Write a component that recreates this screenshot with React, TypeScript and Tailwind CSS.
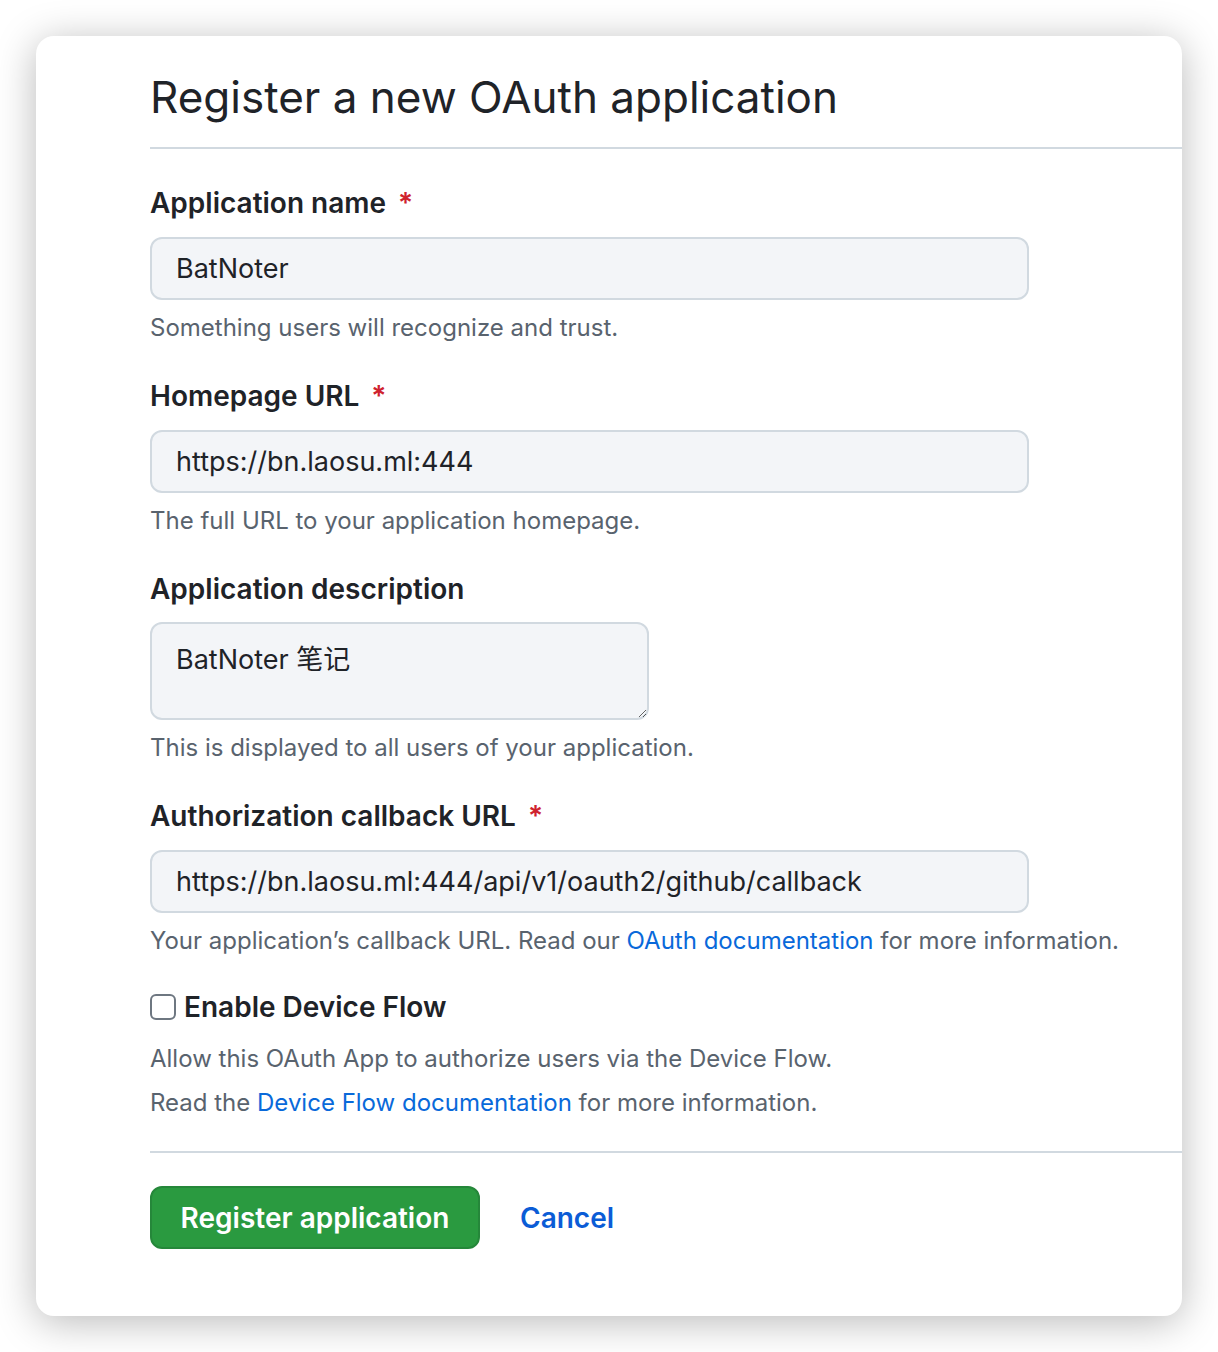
import React from "react";

const font = { fontFamily: 'Inter, "Noto Sans CJK SC", sans-serif' };

function Label({ text, required }: { text: string; required?: boolean }) {
  return (
    <div className="text-[28px] leading-[36px] font-semibold text-[#1f2328]">
      {text}
      {required && <span className="ml-3 text-[#cf222e]">*</span>}
    </div>
  );
}

function Note({ children }: { children: React.ReactNode }) {
  return <p className="mt-[10px] text-[24px] leading-[36px] text-[#59636e]">{children}</p>;
}

function Field({
  label,
  value,
  note,
  required,
}: {
  label: string;
  value: string;
  note: React.ReactNode;
  required?: boolean;
}) {
  return (
    <div className="mt-8 first:mt-0">
      <Label text={label} required={required} />
      <input
        readOnly
        defaultValue={value}
        className="mt-4 block h-[63px] w-[879px] rounded-[12px] border-2 border-[#d1d9e0] bg-[#f3f5f8] px-6 text-[27px] text-[#1f2328] outline-none"
      />
      <Note>{note}</Note>
    </div>
  );
}

export default function App() {
  return (
    <div className="min-h-[1352px] bg-white pt-9 pl-9" style={font}>
      <div className="h-[1280px] w-[1146px] rounded-[18px] bg-white pl-[114px] shadow-[0_6px_40px_rgba(0,0,0,0.28)]">
        <div className="border-b-2 border-[#d1d9e0] pt-[33px] pb-[22px]">
          <h1 className="text-[44px] leading-[56px] font-normal text-[#1f2328]">
            Register a new OAuth application
          </h1>
        </div>

        <div className="pt-[36px]">
          <Field
            label="Application name"
            required
            value="BatNoter"
            note="Something users will recognize and trust."
          />
          <Field
            label="Homepage URL"
            required
            value="https://bn.laosu.ml:444"
            note="The full URL to your application homepage."
          />

          <div className="mt-8">
            <Label text="Application description" />
            <textarea
              readOnly
              defaultValue="BatNoter 笔记"
              className="mt-[15px] block h-[98px] w-[499px] rounded-[12px] border-2 border-[#d1d9e0] bg-[#f3f5f8] px-6 pt-[18px] text-[27px] leading-[36px] text-[#1f2328] outline-none"
            />
            <Note>This is displayed to all users of your application.</Note>
          </div>

          <Field
            label="Authorization callback URL"
            required
            value="https://bn.laosu.ml:444/api/v1/oauth2/github/callback"
            note={
              <>
                Your application’s callback URL. Read our{" "}
                <a className="text-[#0969da]">OAuth documentation</a> for more information.
              </>
            }
          />

          <div className="mt-[30px] flex items-center gap-2">
            <span className="h-[26px] w-[26px] rounded-[6px] border-2 border-[#6e7781] bg-white" />
            <span className="text-[28px] leading-[36px] font-semibold text-[#1f2328]">
              Enable Device Flow
            </span>
          </div>
          <p className="mt-[16px] text-[24px] leading-[36px] text-[#59636e]">
            Allow this OAuth App to authorize users via the Device Flow.
          </p>
          <p className="mt-2 text-[24px] leading-[36px] text-[#59636e]">
            Read the <a className="text-[#0969da]">Device Flow documentation</a> for more information.
          </p>
        </div>

        <div className="mt-[30px] border-t-2 border-[#d1d9e0] pt-[33px]">
          <div className="flex items-center gap-10">
            <button className="h-[63px] w-[330px] rounded-[12px] border-2 border-[#25873a] bg-[#2a9a40] text-[28px] font-semibold text-white">
              Register application
            </button>
            <a className="text-[28px] font-semibold text-[#0b5cd6]">Cancel</a>
          </div>
        </div>
      </div>
    </div>
  );
}
